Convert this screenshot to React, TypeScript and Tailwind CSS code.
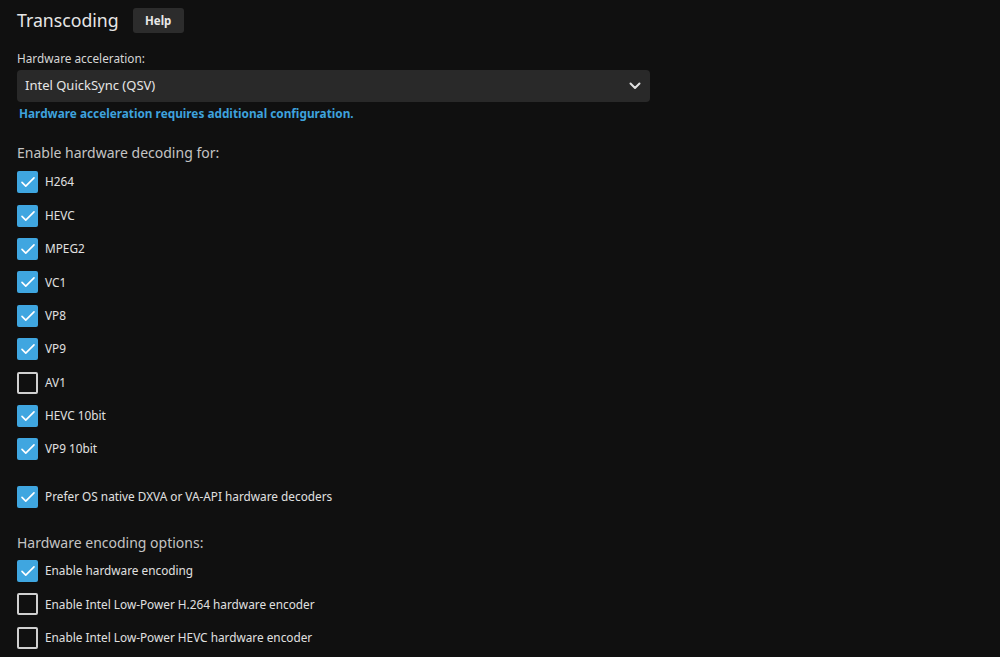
import React, { JSX, useState } from 'react';

interface CheckRowProps {
    label: string;
    checked: boolean;
    onToggle: () => void;
}

function CheckRow({ label, checked, onToggle }: CheckRowProps): JSX.Element {
    return (
        <label className="flex items-center h-[33.4px] cursor-pointer select-none" onClick={onToggle}>
            {checked ? (
                <span className="w-[21px] h-[22px] rounded-[2px] bg-[#3fa6e0] flex items-center justify-center">
                    <svg width="18" height="18" viewBox="0 0 24 24" fill="none" stroke="#ffffff" strokeWidth="2.2" strokeLinecap="round" strokeLinejoin="round">
                        <path d="M4 12.5l5 5L20 6.5" />
                    </svg>
                </span>
            ) : (
                <span className="w-[21px] h-[22px] rounded-[2px] border-2 border-[#d0d0d0]" />
            )}
            <span className="ml-[7px] text-[11.8px] text-[#e0e0e0]">{label}</span>
        </label>
    );
}

export default function App(): JSX.Element {
    const [decoders, setDecoders] = useState<Record<string, boolean>>({
        H264: true,
        HEVC: true,
        MPEG2: true,
        VC1: true,
        VP8: true,
        VP9: true,
        AV1: false,
        'HEVC 10bit': true,
        'VP9 10bit': true,
    });
    const [preferNative, setPreferNative] = useState(true);
    const [encoding, setEncoding] = useState<Record<string, boolean>>({
        'Enable hardware encoding': true,
        'Enable Intel Low-Power H.264 hardware encoder': false,
        'Enable Intel Low-Power HEVC hardware encoder': false,
    });

    return (
        <div className="min-h-[657px] bg-[#101010] text-[#e0e0e0] px-[17px] pt-[8px] overflow-hidden" style={{ fontFamily: '"Noto Sans", sans-serif' }}>
            <div className="flex items-center h-[25px]">
                <h2 className="text-[17.7px] leading-none text-[#e6e6e6]">Transcoding</h2>
                <button className="ml-[14px] w-[51px] h-[25px] rounded-[3px] bg-[#2c2c2c] text-[11.5px] font-bold text-[#e8e8e8]">
                    Help
                </button>
            </div>

            <div className="mt-[20px] text-[11.8px] text-[#d6d6d6] leading-none">Hardware acceleration:</div>
            <div className="mt-[5px] w-[633px] h-[32px] rounded-[4px] bg-[#292929] flex items-center justify-between pl-[8px] pr-[9px]">
                <span className="text-[13px] text-[#e6e6e6]">Intel QuickSync (QSV)</span>
                <svg width="12" height="8" viewBox="0 0 12 8" fill="none" stroke="#e0e0e0" strokeWidth="2" strokeLinecap="round" strokeLinejoin="round">
                    <path d="M1.5 1.5L6 6l4.5-4.5" />
                </svg>
            </div>
            <div className="mt-[3px] ml-[2px] text-[11.8px] font-bold text-[#3ea2dd]">
                Hardware acceleration requires additional configuration.
            </div>

            <div className="mt-[24px] text-[14px] text-[#c4c4c4] leading-none">Enable hardware decoding for:</div>
            <div className="mt-[5px]">
                {Object.keys(decoders).map((k) => (
                    <CheckRow
                        key={k}
                        label={k}
                        checked={decoders[k]}
                        onToggle={() => setDecoders({ ...decoders, [k]: !decoders[k] })}
                    />
                ))}
            </div>
            <div className="mt-[14px]">
                <CheckRow
                    label="Prefer OS native DXVA or VA-API hardware decoders"
                    checked={preferNative}
                    onToggle={() => setPreferNative(!preferNative)}
                />
            </div>

            <div className="mt-[23px] text-[14px] text-[#c4c4c4] leading-none">Hardware encoding options:</div>
            <div className="mt-[4px]">
                {Object.keys(encoding).map((k) => (
                    <CheckRow
                        key={k}
                        label={k}
                        checked={encoding[k]}
                        onToggle={() => setEncoding({ ...encoding, [k]: !encoding[k] })}
                    />
                ))}
            </div>
        </div>
    );
}
